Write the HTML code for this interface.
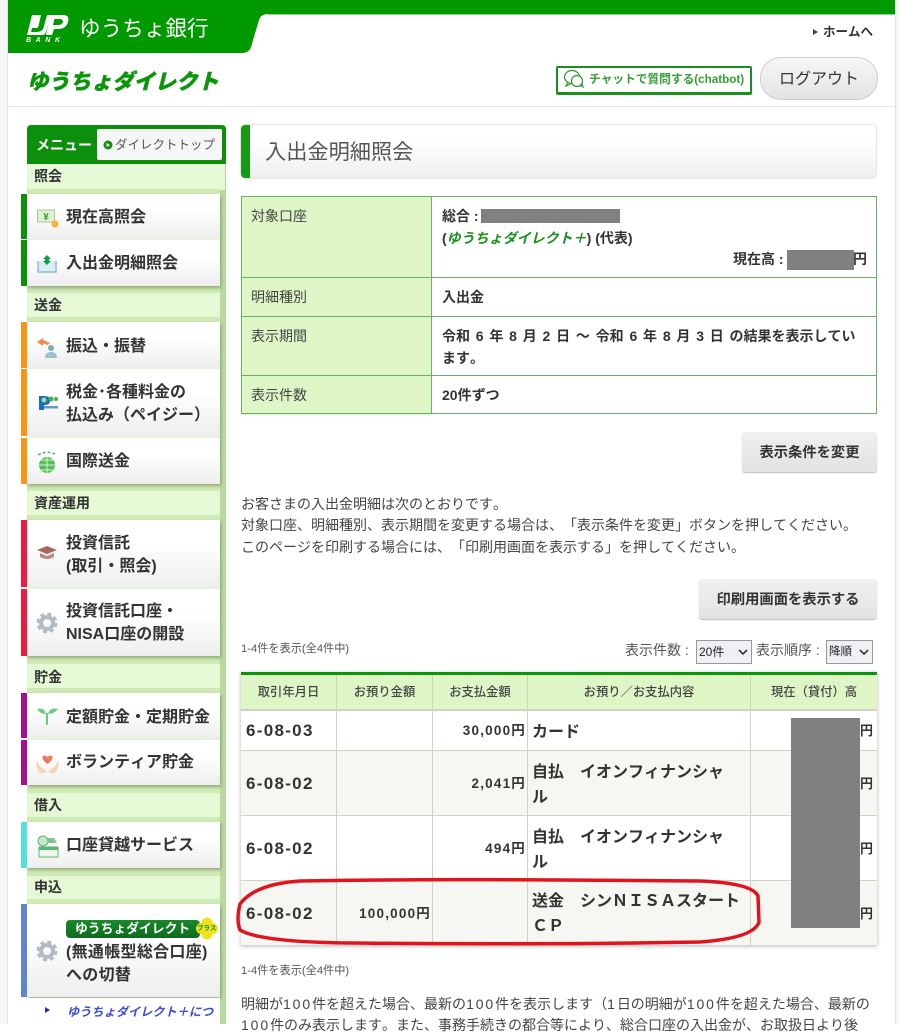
<!DOCTYPE html>
<html lang="ja"><head><meta charset="utf-8"><title>入出金明細照会</title>
<style>
html,body{margin:0;padding:0;background:#fff}
body{width:899px;height:1024px;position:relative;overflow:hidden;font-family:"Liberation Sans","Noto Sans CJK JP",sans-serif;color:#333;text-spacing-trim:space-all;font-kerning:none}
.a,.t{position:absolute}
.t{white-space:nowrap;line-height:20px}
.b{font-weight:700}
.n{letter-spacing:1.9px}
.sh{font-size:14px;font-weight:700;left:34px;color:#333}
.grp{position:absolute;left:27px;width:193px;box-shadow:1px 2px 3px rgba(70,90,50,.45);background:#e5f3d8}
.it{position:absolute;left:27px;width:193px;background:linear-gradient(#fff 35%,#eee)}
.bar{position:absolute;left:21px;width:6px}
.m{position:absolute;left:66px;font-size:16px;font-weight:700;line-height:22.5px;white-space:nowrap;color:#333}
.lb{position:absolute;left:242px;width:190px;background:#def6c6}
.ln{position:absolute;background:#66b266}
.l2{position:absolute;background:#cfd3bd}
.g{position:absolute;background:#808080}
.mm{font-size:14px;font-weight:400;left:251px;color:#444}
.v{font-size:14px;font-weight:700;left:442px;color:#333}
.body{font-size:14px;color:#444;left:241px}
.btn{position:absolute;background:linear-gradient(#f0f0f0,#e2e2e2);border-radius:3px;box-shadow:0 1px 1px #bbb;text-align:center;font-size:14.3px;font-weight:700;line-height:42px;color:#333}
.th{position:absolute;top:682px;font-size:12.3px;font-weight:500;line-height:20px;text-align:center;color:#444}
.d{font-size:17px;font-weight:700;left:246px;color:#333;letter-spacing:1.3px}
.am{font-size:13.5px;font-weight:700;text-align:right;color:#333;letter-spacing:1.2px}
.c{font-size:16px;font-weight:700;left:532px;line-height:25px;color:#333}
.y{font-size:13px;font-weight:700;left:860px;color:#333}
.sel{position:absolute;top:640px;height:22px;background:#eef0f3;border:1px solid #999;font-size:12px;line-height:22px;color:#222;box-sizing:content-box;padding-left:2px}
</style></head><body>
<!-- page edges -->
<div class="a" style="left:0;top:0;width:7px;height:1024px;background:#f7f7f7"></div>
<div class="a" style="left:7px;top:0;width:1px;height:1024px;background:#e4e4e4"></div>
<div class="a" style="left:895px;top:0;width:1px;height:1024px;background:#e4e4e4"></div>
<div class="a" style="left:896px;top:0;width:3px;height:1024px;background:#f7f7f7"></div>

<!-- header -->
<svg class="a" style="left:0;top:0" width="899" height="60">
<path d="M8 0H895V14H268Q261 14 259 20L251 47Q249 53 242 53H8Z" fill="#009900"/>
<path d="M268 14.5H895" stroke="#8fd08f" stroke-width="1"/>
<path d="M32 15H51L46 32Q45 35 42 35H27Z" fill="#fff"/>
<path d="M41 15H47L43.500 28Q42 32 36 32H31L32 28H36Q38 28 38.500 26Z" fill="#009900"/>
<path d="M50 15H63Q70 15 68 22Q66 29 58 29H54L52 35H46ZM54.500 19L53 25H58Q62 25 63 22Q63 19 60 19Z" fill="#fff" fill-rule="evenodd"/>
</svg>
<div class="t" style="left:26px;top:37px;font-size:7px;line-height:8px;font-weight:700;font-style:italic;color:#fff;letter-spacing:4.6px">BANK</div>
<div class="t" style="left:79px;top:14px;font-size:21.6px;line-height:30px;color:#fff">ゆうちょ銀行</div>
<div class="t" style="left:27px;top:67px;font-size:21.3px;line-height:30px;font-weight:900;color:#0a960a;font-style:italic;-webkit-text-stroke:.4px #0a960a">ゆうちょダイレクト</div>
<svg class="a" style="left:812px;top:28px" width="8" height="8"><path d="M1 1L6 4L1 7Z" fill="#444"/></svg>
<div class="t b" style="left:823px;top:22px;font-size:12.5px;color:#333">ホームへ</div>
<div class="a" style="left:556px;top:66px;width:192px;height:24px;border:2px solid #1d8f1d;border-bottom-width:3px;border-radius:2px;background:#fff"></div>
<svg class="a" style="left:562px;top:69px" width="24" height="20" fill="none" stroke="#2e962e" stroke-width="1.2"><ellipse cx="10" cy="8" rx="7.5" ry="6.5" fill="#fff"/><path d="M6 13L4 17L9 14.500"/><circle cx="15" cy="12" r="5.500" fill="#fff"/><path d="M18 16L21 18L19.500 14"/></svg>
<div class="t b" style="left:589px;top:70px;font-size:11.7px;color:#35a035">チャットで質問する(chatbot)</div>
<div class="a" style="left:760px;top:57px;width:116px;height:41px;border:1px solid #ccc;border-radius:21px;background:linear-gradient(#f7f7f7,#e3e3e3);text-align:center;font-size:16px;line-height:43px;color:#333">ログアウト</div>
<div class="a" style="left:8px;top:106px;width:887px;height:1px;background:#e6e6e6"></div>

<!-- sidebar -->
<div class="a" style="left:27px;top:164px;width:199px;height:860px;background:#e5f9d6"></div>
<div class="a" style="left:220px;top:190px;width:6px;height:834px;background:#b9d99e"></div>
<div class="a" style="left:225px;top:164px;width:1px;height:860px;background:#b4d49a"></div>
<div class="a" style="left:27px;top:125px;width:199px;height:39px;background:#0c900c;border-radius:4px 4px 0 0"></div>
<div class="t b" style="left:36px;top:135px;font-size:14px;color:#fff">メニュー</div>
<div class="a" style="left:97px;top:129px;width:125px;height:31px;background:#f6f6f6;border-radius:2px"></div>
<svg class="a" style="left:103px;top:140px" width="10" height="10"><circle cx="5" cy="5" r="4.500" fill="#118f11"/><path d="M3.500 3L7 5L3.500 7Z" fill="#fff"/></svg>
<div class="t" style="left:115px;top:135px;font-size:12.5px;color:#555">ダイレクトトップ</div>

<div class="a" style="left:27px;top:189px;width:193px;height:5px;background:#cfeab5"></div>
<div class="t sh" style="top:166px">照会</div>
<div class="t sh" style="top:295px">送金</div>
<div class="t sh" style="top:493px">資産運用</div>
<div class="t sh" style="top:667px">貯金</div>
<div class="t sh" style="top:795px">借入</div>
<div class="t sh" style="top:877px">申込</div>

<div class="a" style="left:27px;top:286px;width:193px;height:7px;background:#cfeab5"></div>
<div class="a" style="left:27px;top:317px;width:193px;height:5px;background:#cfeab5"></div>
<div class="a" style="left:27px;top:484px;width:193px;height:7px;background:#cfeab5"></div>
<div class="a" style="left:27px;top:515px;width:193px;height:5px;background:#cfeab5"></div>
<div class="a" style="left:27px;top:656px;width:193px;height:8px;background:#cfeab5"></div>
<div class="a" style="left:27px;top:688px;width:193px;height:5px;background:#cfeab5"></div>
<div class="a" style="left:27px;top:785px;width:193px;height:8px;background:#cfeab5"></div>
<div class="a" style="left:27px;top:817px;width:193px;height:5px;background:#cfeab5"></div>
<div class="a" style="left:27px;top:868px;width:193px;height:8px;background:#cfeab5"></div>
<div class="a" style="left:27px;top:899px;width:193px;height:5px;background:#cfeab5"></div>

<div class="grp" style="top:194px;height:92px"></div>
<div class="grp" style="top:322px;height:162px"></div>
<div class="grp" style="top:520px;height:136px"></div>
<div class="grp" style="top:693px;height:92px"></div>
<div class="grp" style="top:822px;height:46px"></div>
<div class="grp" style="top:904px;height:93px"></div>

<div class="it" style="top:194px;height:45px"></div><div class="it" style="top:240px;height:46px"></div>
<div class="it" style="top:322px;height:46px"></div><div class="it" style="top:369px;height:67px"></div><div class="it" style="top:438px;height:46px"></div>
<div class="it" style="top:520px;height:67px"></div><div class="it" style="top:589px;height:67px"></div>
<div class="it" style="top:693px;height:45px"></div><div class="it" style="top:740px;height:45px"></div>
<div class="it" style="top:822px;height:46px"></div>
<div class="it" style="top:904px;height:93px"></div>
<div class="a" style="left:27px;top:998px;width:193px;height:26px;background:#fff"></div>

<div class="bar" style="top:194px;height:45px;background:#0a910a"></div><div class="bar" style="top:240px;height:46px;background:#0a910a"></div>
<div class="bar" style="top:322px;height:46px;background:#fa9414"></div><div class="bar" style="top:369px;height:67px;background:#fa9414"></div><div class="bar" style="top:438px;height:46px;background:#fa9414"></div>
<div class="bar" style="top:520px;height:67px;background:#ee1a41"></div><div class="bar" style="top:589px;height:67px;background:#ee1a41"></div>
<div class="bar" style="top:693px;height:45px;background:#a40f96"></div><div class="bar" style="top:740px;height:45px;background:#a40f96"></div>
<div class="bar" style="top:822px;height:46px;background:#56e0e0"></div>
<div class="bar" style="top:904px;height:93px;background:#5f84d0"></div>

<div class="m" style="top:207px">現在高照会</div>
<div class="m" style="top:253px">入出金明細照会</div>
<div class="m" style="top:336px">振込・振替</div>
<div class="m" style="top:382px">税金･各種料金の<br>払込み（ペイジー）</div>
<div class="m" style="top:451px">国際送金</div>
<div class="m" style="top:533px">投資信託<br>(取引・照会)</div>
<div class="m" style="top:601px">投資信託口座・<br>NISA口座の開設</div>
<div class="m" style="top:707px">定額貯金・定期貯金</div>
<div class="m" style="top:752px">ボランティア貯金</div>
<div class="m" style="top:835px">口座貸越サービス</div>
<div class="m" style="top:942px;letter-spacing:.3px">(無通帳型総合口座)<br>への切替</div>

<!-- menu icons -->
<svg class="a" style="left:36px;top:207px" width="24" height="24"><rect x="1.500" y="3" width="17" height="12" fill="#dff3d0" stroke="#9cc8a8"/><text x="10" y="13" font-size="10" font-weight="700" text-anchor="middle" fill="#3a9a3a" font-family="Liberation Sans">¥</text><circle cx="19" cy="17" r="3.500" fill="#f5b335"/></svg>
<svg class="a" style="left:36px;top:253px" width="24" height="24"><path d="M2 8V19H20V8" fill="#dcecf3" stroke="#8dbcd0" stroke-width="1.500"/><path d="M11 2L15 6H13V8L15 8L11 12L7 8L9 8V6H7Z" fill="#1c9a50"/></svg>
<svg class="a" style="left:36px;top:335px" width="24" height="24"><path d="M1 7L7 3V5L14 8L12 10L7 8.500V11Z" fill="#f28a4a"/><circle cx="15" cy="13" r="3" fill="#79aebd"/><path d="M9 23Q9 17 15 17Q21 17 21 23Z" fill="#9cc1cd"/></svg>
<svg class="a" style="left:36px;top:392px" width="24" height="24"><path d="M3 4H9Q14 4 14 9Q14 13 8 13V18H3Z" fill="#1a6fb8"/><circle cx="8" cy="8" r="2.500" fill="#9fd8a0"/><circle cx="15" cy="7" r="2.500" fill="#3cb54a"/><circle cx="20" cy="7" r="2" fill="#3cb54a"/><rect x="7" y="14" width="15" height="2.500" fill="#2a6fb0" opacity=".7"/></svg>
<svg class="a" style="left:36px;top:450px" width="24" height="24"><circle cx="11" cy="15" r="8" fill="#55c05a"/><path d="M3 15H19M11 7V23M5 10H17M5 20H17" stroke="#d8f2d8" stroke-width="1"/><path d="M2 5Q11 0 19 4" stroke="#5aab6a" stroke-width="1.500" fill="none" stroke-dasharray="3 2"/></svg>
<svg class="a" style="left:36px;top:542px" width="24" height="22"><path d="M1 8L11 4L21 8L11 12Z" fill="#a0695a"/><path d="M4 11V15Q11 19 18 15V11L11 14Z" fill="#bb8b7c"/></svg>
<svg class="a" style="left:36px;top:612px" width="22" height="22"><circle cx="11" cy="11" r="6" fill="none" stroke="#b4bac2" stroke-width="4"/><circle cx="11" cy="11" r="9" fill="none" stroke="#b4bac2" stroke-width="3" stroke-dasharray="4 3.070"/></svg>
<svg class="a" style="left:36px;top:704px" width="22" height="24" fill="#6dcb7c"><path d="M10 10Q4 10 1 5Q8 3 10 10ZM12 10Q18 10 22 5Q14 3 12 10Z"/><rect x="10" y="9" width="2" height="12"/></svg>
<svg class="a" style="left:36px;top:752px" width="24" height="22"><path d="M11.500 12Q6 8 6.500 5Q8 2 11.500 5Q15 2 16.500 5Q17 8 11.500 12Z" fill="#ec7a5c"/><path d="M1 8Q3 16 10 18V21H4Q-1 15 1 8ZM22 8Q20 16 13 18V21H19Q24 15 22 8Z" fill="#f7d3ba"/></svg>
<svg class="a" style="left:36px;top:834px" width="24" height="24"><circle cx="7" cy="7" r="5" fill="#c3e8cb" stroke="#5cb572"/><rect x="3" y="13" width="19" height="10" fill="#ecf7ef" stroke="#5cb572"/><rect x="3" y="13" width="19" height="3" fill="#5cb572"/><path d="M10 4H18L21 9H12Z" fill="#7cc68e"/></svg>
<svg class="a" style="left:36px;top:940px" width="22" height="22"><circle cx="11" cy="11" r="6" fill="none" stroke="#b4bac2" stroke-width="4"/><circle cx="11" cy="11" r="9" fill="none" stroke="#b4bac2" stroke-width="3" stroke-dasharray="4 3.070"/></svg>

<!-- plus badge -->
<div class="a" style="left:66px;top:920px;width:134px;height:18px;border-radius:4px;background:linear-gradient(#1a8a2a,#0d6a20)"></div>
<div class="t b" style="left:75px;top:919px;font-size:12.8px;color:#fff">ゆうちょダイレクト</div>
<svg class="a" style="left:196px;top:915px" width="24" height="28"><circle cx="11" cy="8" r="5.500" fill="#f0e31a"/><circle cx="11" cy="19" r="5.500" fill="#f0e31a"/><circle cx="5.500" cy="13.500" r="5.500" fill="#f0e31a"/><circle cx="16.500" cy="13.500" r="5.500" fill="#f0e31a"/></svg>
<div class="t b" style="left:197px;top:919px;font-size:6.500px;color:#0a8a2a">プラス</div>

<svg class="a" style="left:44px;top:1006px" width="8" height="8"><path d="M1 1L6 4L1 7Z" fill="#2030c0"/></svg>
<div class="t b" style="left:67px;top:1002px;font-size:12.2px;font-style:italic;color:#3a4fd8">ゆうちょダイレクト＋につ</div>

<!-- title -->
<div class="a" style="left:241px;top:125px;width:635px;height:53px;background:linear-gradient(#fff 30%,#eee);border-radius:4px;box-shadow:0 0 2px #bbb"></div>
<div class="a" style="left:241px;top:125px;width:9px;height:53px;background:#169a16;border-radius:4px 0 0 4px"></div>
<div class="t" style="left:265px;top:138px;font-size:21.2px;line-height:30px;color:#555">入出金明細照会</div>

<!-- info table -->
<div class="lb" style="top:197px;height:218px"></div>
<div class="ln" style="left:241px;top:196px;width:636px;height:1px"></div>
<div class="ln" style="left:241px;top:277px;width:636px;height:1px"></div>
<div class="ln" style="left:241px;top:316px;width:636px;height:1px"></div>
<div class="ln" style="left:241px;top:375px;width:636px;height:1px"></div>
<div class="ln" style="left:241px;top:413px;width:636px;height:1px"></div>
<div class="ln" style="left:241px;top:196px;width:1px;height:218px"></div>
<div class="ln" style="left:431px;top:196px;width:1px;height:218px"></div>
<div class="ln" style="left:876px;top:196px;width:1px;height:218px"></div>
<div class="t mm" style="top:206px">対象口座</div>
<div class="t mm" style="top:287px">明細種別</div>
<div class="t mm" style="top:326px">表示期間</div>
<div class="t mm" style="top:385px">表示件数</div>
<div class="t v" style="top:206px">総合 :</div>
<div class="g" style="left:481px;top:209px;width:139px;height:14px"></div>
<div class="t v" style="top:228px">(<span style="color:#17921c;font-style:italic">ゆうちょダイレクト＋</span>) (代表)</div>
<div class="t v" style="left:733px;top:249px">現在高 :</div>
<div class="g" style="left:787px;top:250px;width:67px;height:20px"></div>
<div class="t v" style="left:853px;top:249px">円</div>
<div class="t v" style="top:287px">入出金</div>
<div class="t v" style="top:326px;word-spacing:1.9px">令和 6 年 8 月 2 日 ～ 令和 6 年 8 月 3 日 の結果を表示してい</div>
<div class="t v" style="top:348px">ます。</div>
<div class="t v" style="top:385px">20件ずつ</div>

<div class="btn" style="left:742px;top:432px;width:135px;height:40px">表示条件を変更</div>
<div class="t body" style="top:494px">お客さまの入出金明細は次のとおりです。</div>
<div class="t body" style="top:515px">対象口座、明細種別、表示期間を変更する場合は、「表示条件を変更」ボタンを押してください。</div>
<div class="t body" style="top:537px">このページを印刷する場合には、「印刷用画面を表示する」を押してください。</div>
<div class="btn" style="left:699px;top:579px;width:178px;height:40px">印刷用画面を表示する</div>

<div class="t" style="left:241px;top:639px;font-size:11.2px;color:#555">1-4件を表示(全4件中)</div>
<div class="t" style="left:625px;top:640px;font-size:14px;color:#555">表示件数 :</div>
<div class="sel" style="left:696px;width:52px">20件<svg class="a" style="left:41px;top:8px" width="10" height="7"><path d="M1 1L5 5L9 1" fill="none" stroke="#222" stroke-width="1.500"/></svg></div>
<div class="t" style="left:756px;top:640px;font-size:14px;color:#555">表示順序 :</div>
<div class="sel" style="left:826px;width:43px;font-size:11.5px">降順<svg class="a" style="left:32px;top:8px" width="10" height="7"><path d="M1 1L5 5L9 1" fill="none" stroke="#222" stroke-width="1.500"/></svg></div>

<!-- main table -->
<div class="a" style="left:241px;top:672px;width:636px;height:273px;background:#fff;box-shadow:0 1px 4px rgba(0,0,0,.3)"></div>
<div class="a" style="left:241px;top:672px;width:636px;height:3px;background:#0c940c"></div>
<div class="a" style="left:241px;top:675px;width:636px;height:35px;background:#def6c6"></div>
<div class="a" style="left:241px;top:751px;width:636px;height:64px;background:#f6f6f3"></div>
<div class="a" style="left:241px;top:881px;width:636px;height:64px;background:#f6f6f3"></div>
<div class="l2" style="left:241px;top:709px;width:636px;height:2px"></div>
<div class="l2" style="left:241px;top:750px;width:636px;height:1px"></div>
<div class="l2" style="left:241px;top:815px;width:636px;height:1px"></div>
<div class="l2" style="left:241px;top:880px;width:636px;height:1px"></div>
<div class="l2" style="left:336px;top:675px;width:1px;height:270px"></div>
<div class="l2" style="left:432px;top:675px;width:1px;height:270px"></div>
<div class="l2" style="left:527px;top:675px;width:1px;height:270px"></div>
<div class="l2" style="left:750px;top:675px;width:1px;height:270px"></div>

<div class="th" style="left:241px;width:95px">取引年月日</div>
<div class="th" style="left:337px;width:95px">お預り金額</div>
<div class="th" style="left:433px;width:94px">お支払金額</div>
<div class="th" style="left:528px;width:222px">お預り／お支払内容</div>
<div class="th" style="left:751px;width:126px">現在（貸付）高</div>

<div class="t d" style="top:721px">6-08-03</div>
<div class="t d" style="top:774px">6-08-02</div>
<div class="t d" style="top:839px">6-08-02</div>
<div class="t d" style="top:904px">6-08-02</div>
<div class="t am" style="left:433px;width:93px;top:721px">30,000円</div>
<div class="t am" style="left:433px;width:93px;top:774px">2,041円</div>
<div class="t am" style="left:433px;width:93px;top:839px">494円</div>
<div class="t am" style="left:337px;width:94px;top:904px">100,000円</div>
<div class="t c" style="top:720px">カード</div>
<div class="t c" style="top:760px">自払　イオンフィナンシャ<br>ル</div>
<div class="t c" style="top:825px">自払　イオンフィナンシャ<br>ル</div>
<div class="t c" style="top:889px">送金　シンＮＩＳＡスタート<br>ＣＰ</div>
<div class="t y" style="top:721px">円</div>
<div class="t y" style="top:774px">円</div>
<div class="t y" style="top:839px">円</div>
<div class="t y" style="top:904px">円</div>
<div class="g" style="left:791px;top:718px;width:69px;height:210px"></div>

<svg class="a" style="left:230px;top:870px" width="540" height="80"><path d="M70 11Q200 9 330 10L470 11Q522 13 528 26L529 52Q524 68 470 72Q300 75 120 73Q30 72 10 60Q6 50 10 34Q25 14 70 11Z" fill="none" stroke="#e0141f" stroke-width="3.500"/></svg>

<div class="t" style="left:241px;top:961px;font-size:11.2px;color:#555">1-4件を表示(全4件中)</div>
<div class="t body" style="top:994px;left:241px">明細が<span class="n">100</span>件を超えた場合、最新の<span class="n">100</span>件を表示します（<span class="n">1</span>日の明細が<span class="n">100</span>件を超えた場合、最新の</div>
<div class="t body" style="top:1015px;left:241px"><span class="n">100</span>件のみ表示します。また、事務手続きの都合等により、総合口座の入出金が、お取扱日より後</div>
</body></html>
